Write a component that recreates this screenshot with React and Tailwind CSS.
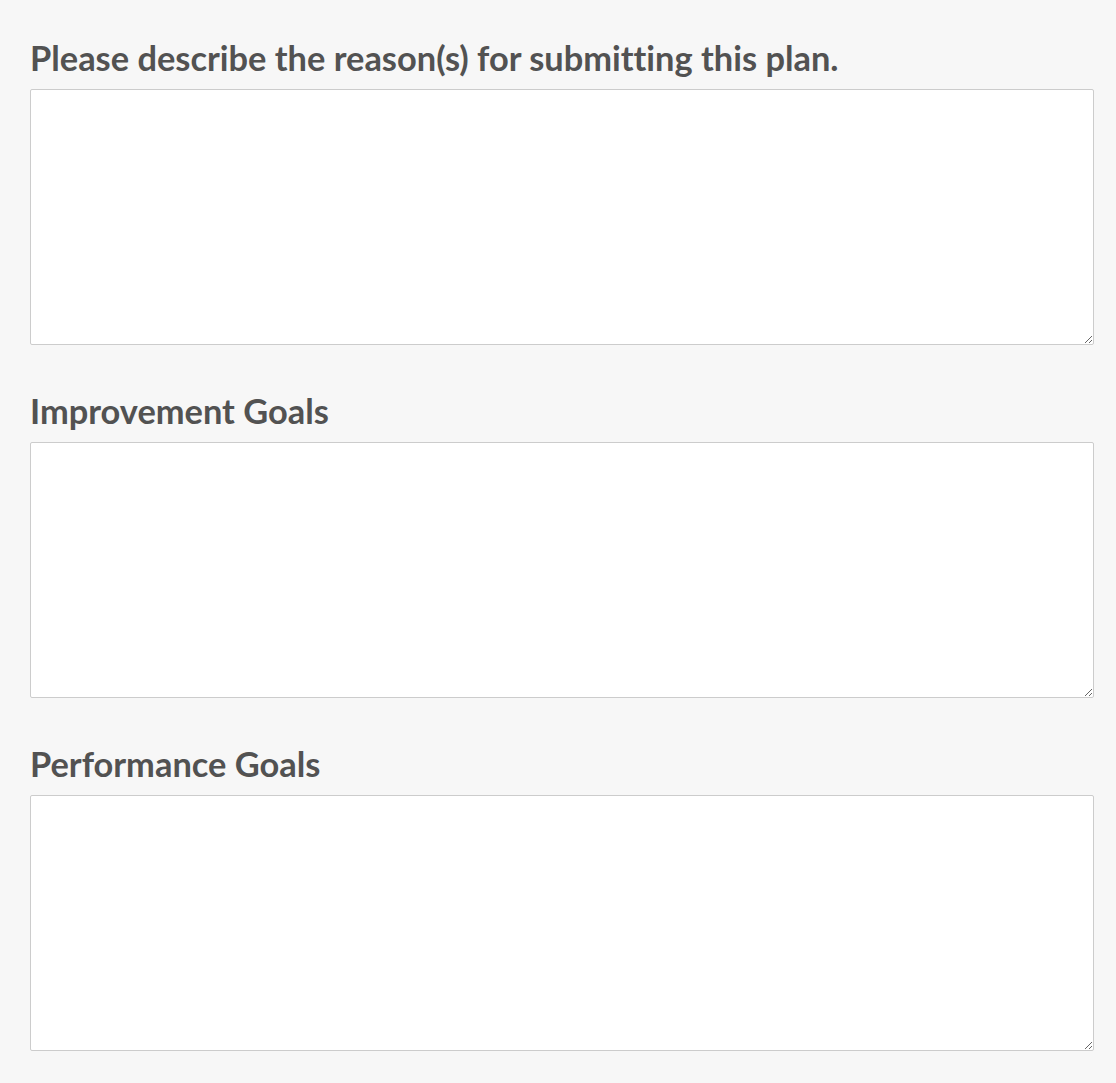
const fields = [
    'Please describe the reason(s) for submitting this plan.',
    'Improvement Goals',
    'Performance Goals',
];

export default function App() {
    return (
        <div className="min-h-[1083px] bg-[#f7f7f7] pl-[30px] pr-[22px] pt-[36px]" style={{ fontFamily: 'Lato, "Open Sans", sans-serif' }}>
            <div className="flex flex-col gap-[44px]">
                {fields.map((label) => (
                    <div key={label} className="flex flex-col">
                        <label className="text-[34.4px] leading-[44px] font-bold text-[#525252] mb-[9px] [font-variant-ligatures:none]">{label}</label>
                        <textarea className="h-[256px] w-full bg-white border border-[#cccccc] rounded-[2px] outline-none" />
                    </div>
                ))}
            </div>
        </div>
    );
}
